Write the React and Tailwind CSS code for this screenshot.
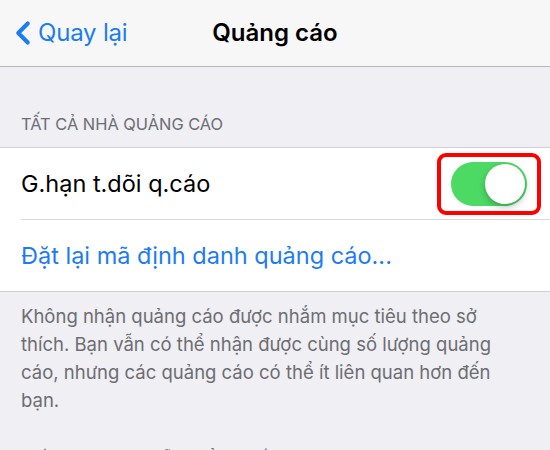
import { ChevronLeft } from 'lucide-react';

export default function App() {
    return (
        <div
            className="h-[450px] w-[550px] overflow-hidden bg-[#efeff4]"
            style={{ fontFamily: 'Inter, "Noto Sans", sans-serif' }}
        >
            <header className="relative flex h-[67px] items-center border-b border-[#b8b8bc] bg-[#f7f7f8]">
                <button className="flex items-center pl-[4px] text-[#1b7cf4]">
                    <ChevronLeft size={38} strokeWidth={2.6} className="-mr-[4px]" />
                    <span className="text-[24px] tracking-[-0.2px]">Quay lại</span>
                </button>
                <h1 className="absolute left-1/2 -translate-x-1/2 text-[24px] font-semibold text-black">
                    Quảng cáo
                </h1>
            </header>

            <div className="flex h-[80px] items-end pb-[10px] pl-[21px] text-[16.4px] text-[#6d6d72]">
                TẤT CẢ NHÀ QUẢNG CÁO
            </div>

            <section className="border-y border-[#d0d0d4] bg-white">
                <div className="flex h-[71px] items-center justify-between pl-[21px] pr-[9px]">
                    <span className="text-[23.5px] text-black">G.hạn t.dõi q.cáo</span>
                    <div className="flex h-[62px] w-[104px] items-center justify-center rounded-[9px] border-[4px] border-[#ff0000]">
                        <div className="flex h-[44px] w-[76px] items-center justify-end rounded-full bg-[#4cd964] p-[2px]">
                            <div className="h-[40px] w-[40px] rounded-full bg-white shadow-[0_3px_6px_rgba(0,0,0,0.25)]" />
                        </div>
                    </div>
                </div>
                <div className="ml-[21px] border-t border-[#d8d8dc]" />
                <div className="flex h-[71px] items-center pl-[21px]">
                    <span className="text-[23.5px] text-[#1b7cf4]">
                        Đặt lại mã định danh quảng cáo...
                    </span>
                </div>
            </section>

            <p className="pl-[21px] pr-[40px] pt-[10px] text-[18.5px] leading-[28px] text-[#6d6d72]">
                Không nhận quảng cáo được nhắm mục tiêu theo sở thích. Bạn vẫn có thể nhận được cùng số
                lượng quảng cáo, nhưng các quảng cáo có thể ít liên quan hơn đến bạn.
            </p>

            <div className="pl-[21px] pt-[32px] text-[16.4px] text-[#6d6d72]">
                GIỚI HẠN THEO DÕI QUẢNG CÁO
            </div>
        </div>
    );
}
